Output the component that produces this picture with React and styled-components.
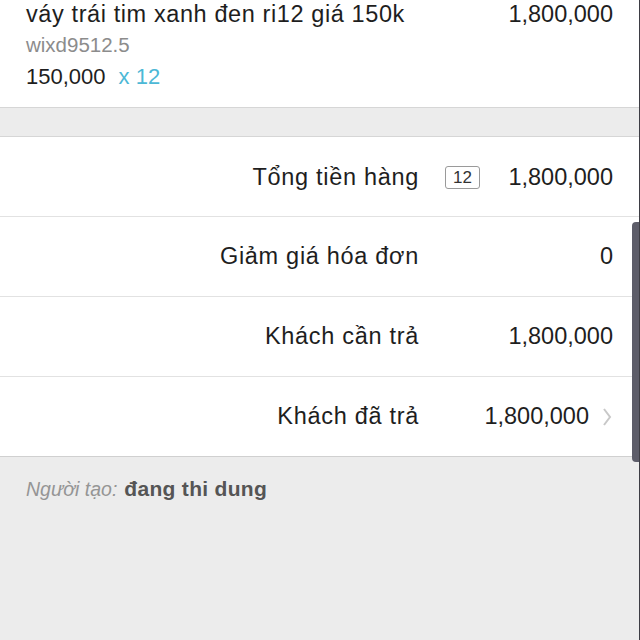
import React from "react";
import styled, { createGlobalStyle } from "styled-components";

const Global = createGlobalStyle`
  html, body { margin: 0; padding: 0; background: #ececec; }
  body { font-family: "Liberation Sans", Helvetica, Arial, sans-serif; color: #222; }
`;

const Page = styled.div`
  position: relative;
  width: 640px;
  height: 640px;
  overflow: hidden;
  background: #ececec;
  box-sizing: border-box;
  border-right: 1px solid #3d3d44;
`;

const ItemCard = styled.div`
  background: #fff;
  height: 108px;
  box-sizing: border-box;
  padding: 0 26px;
  border-bottom: 1px solid #d6d6d6;
  display: flex;
  flex-direction: column;
`;

const ItemTop = styled.div`
  display: flex;
  justify-content: space-between;
  align-items: baseline;
  font-size: 23.5px;
  line-height: 28px;
  color: #1e1e1e;
`;

const Wide = styled.span`
  letter-spacing: 0.6px;
`;

const Sku = styled.div`
  font-size: 20.5px;
  line-height: 24px;
  color: #8c8c8c;
  margin-top: 5px;
`;

const PriceLine = styled.div`
  font-size: 22px;
  line-height: 26px;
  margin-top: 7px;
  color: #1e1e1e;
`;

const Qty = styled.span`
  color: #4cb8d6;
  margin-left: 13px;
`;

const Gap = styled.div`
  height: 28px;
`;

const Summary = styled.div`
  background: #fff;
  border-top: 1px solid #d6d6d6;
  border-bottom: 1px solid #d0d0d0;
`;

const Row = styled.div`
  display: grid;
  grid-template-columns: 1fr 220px;
  align-items: center;
  height: ${(p) => (p.$first ? "78px" : "79px")};
  padding-top: ${(p) => (p.$first ? "1px" : "0")};
  border-top: ${(p) => (p.$first ? "none" : "1px solid #e2e2e2")};
  font-size: 23.5px;
  color: #1e1e1e;
`;

const Label = styled.div`
  text-align: right;
  letter-spacing: 0.7px;
`;

const ValueCell = styled.div`
  display: flex;
  align-items: center;
  justify-content: flex-end;
  padding-left: 26px;
  padding-right: ${(p) => (p.$chevron ? "50px" : "26px")};
  position: relative;
`;

const Badge = styled.span`
  font-size: 17px;
  line-height: 19px;
  padding: 1px 7px;
  border: 1px solid #9a9a9a;
  border-radius: 3px;
  color: #333;
  margin-right: auto;
`;

const Chevron = styled.svg`
  position: absolute;
  right: 27px;
  top: 50%;
  margin-top: -10px;
`;

const Footer = styled.div`
  padding: 20px 26px;
  font-size: 21px;
  color: #555;
`;

const Muted = styled.span`
  color: #959595;
  font-style: italic;
  font-size: 19.5px;
`;

const Author = styled.span`
  font-weight: bold;
  color: #555;
  margin-left: 7px;
  letter-spacing: 0.3px;
`;

const ScrollThumb = styled.div`
  position: absolute;
  right: 0;
  top: 222px;
  width: 7px;
  height: 240px;
  background: #5d5d69;
  border-radius: 4px 0 0 4px;
`;

const rows = [
  { label: "Tổng tiền hàng", value: "1,800,000", badge: "12" },
  { label: "Giảm giá hóa đơn", value: "0" },
  { label: "Khách cần trả", value: "1,800,000" },
  { label: "Khách đã trả", value: "1,800,000", chevron: true },
];

export default function App() {
  return (
    <Page>
      <Global />
      <ItemCard>
        <ItemTop>
          <Wide>váy trái tim xanh đen ri12 giá 150k</Wide>
          <span>1,800,000</span>
        </ItemTop>
        <Sku>wixd9512.5</Sku>
        <PriceLine>
          150,000<Qty>x 12</Qty>
        </PriceLine>
      </ItemCard>
      <Gap />
      <Summary>
        {rows.map((r, i) => (
          <Row key={r.label} $first={i === 0}>
            <Label>{r.label}</Label>
            <ValueCell $chevron={r.chevron}>
              {r.badge && <Badge>{r.badge}</Badge>}
              {r.value}
              {r.chevron && (
                <Chevron width="10" height="20" viewBox="0 0 10 20">
                  <path d="M2 2 L8 10 L2 18" fill="none" stroke="#c8c8c8" strokeWidth="2" />
                </Chevron>
              )}
            </ValueCell>
          </Row>
        ))}
      </Summary>
      <Footer>
        <Muted>Người tạo:</Muted>
        <Author>đang thi dung</Author>
      </Footer>
      <ScrollThumb />
    </Page>
  );
}
